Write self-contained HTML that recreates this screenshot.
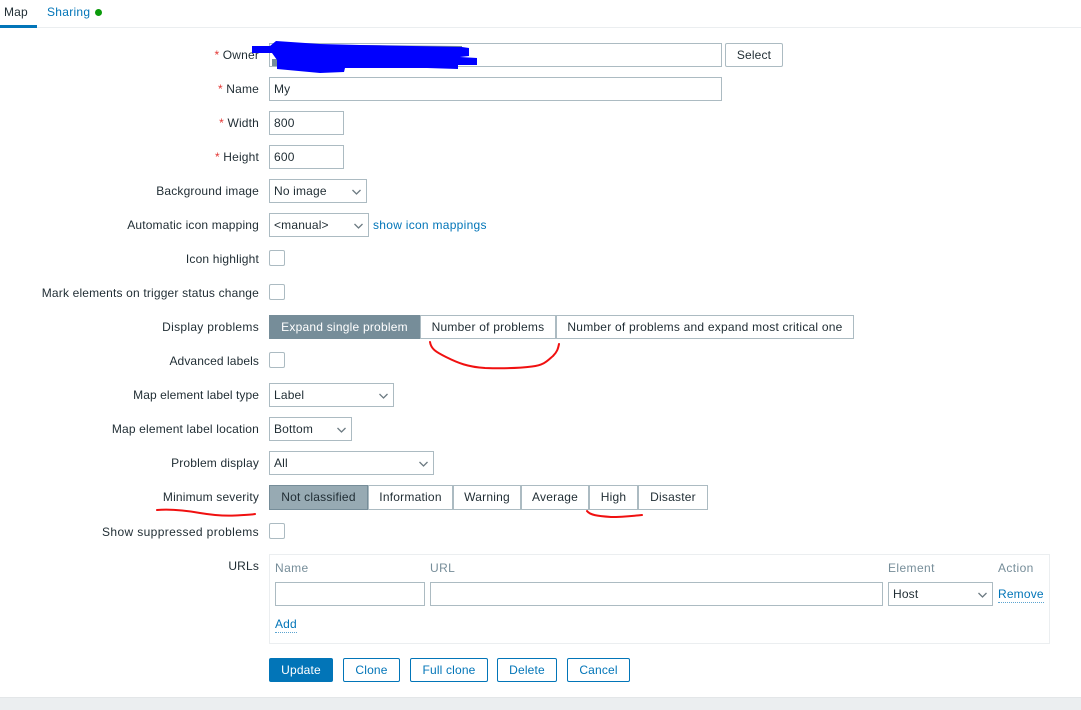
<!DOCTYPE html>
<html><head><meta charset="utf-8"><style>
html,body{margin:0;padding:0;background:#fff}
body{width:1081px;height:710px;overflow:hidden;position:relative;font:12px/14px "Liberation Sans",Arial,sans-serif;color:#1f2c33;letter-spacing:.17px}
.a,.l,.i,.s,.c,.b,.t{position:absolute;box-sizing:border-box}
.l{right:822px;text-align:right;white-space:nowrap;height:14px}
.l i{font-style:normal;color:#e33734}
.i,.s{border:1px solid #acbbc2;height:24px;background:#fff;padding:4px 4px;white-space:nowrap}
.s svg{position:absolute;right:5px;top:9px}
.c{width:16px;height:16px;border:1px solid #acbbc2;border-radius:2px;background:#fff}
.b{height:24px;border:1px solid #0275b8;border-radius:2px;color:#0275b8;text-align:center;padding-top:4px;top:658px;background:#fff}
.t{height:24px;border:1px solid #acbbc2;margin-left:-1px;text-align:center;padding-top:4px;background:#fff;white-space:nowrap;letter-spacing:.22px}
.h{position:absolute;color:#768d99;top:561px;white-space:nowrap;letter-spacing:.4px}
.k{position:absolute;color:#0275b8;white-space:nowrap;letter-spacing:.28px}
.d{border-bottom:1px dotted #5ba4d0;padding-bottom:1px;letter-spacing:.17px}
</style></head><body>
<div class="a" style="left:0;top:27px;width:1081px;height:1px;background:#ebeef0"></div>
<div class="a" style="left:0;top:25px;width:37px;height:3px;background:#0275b8"></div>
<div class="a" style="left:4px;top:5px">Map</div>
<div class="k" style="left:47px;top:5px">Sharing</div>
<div class="a" style="left:95px;top:9px;width:7px;height:7px;border-radius:50%;background:#0a9a0a"></div>

<div class="l" style="top:48px"><i>*</i> Owner</div>
<div class="i" style="left:269px;top:43px;width:453px"></div>
<div class="b" style="left:725px;top:43px;width:58px;border-color:#acbbc2;color:#1f2c33">Select</div>
<div class="l" style="top:82px"><i>*</i> Name</div>
<div class="i" style="left:269px;top:77px;width:453px">My</div>
<div class="l" style="top:116px"><i>*</i> Width</div>
<div class="i" style="left:269px;top:111px;width:75px">800</div>
<div class="l" style="top:150px"><i>*</i> Height</div>
<div class="i" style="left:269px;top:145px;width:75px">600</div>
<div class="l" style="top:184px">Background image</div>
<div class="s" style="left:269px;top:179px;width:98px">No image<svg width="9" height="6" viewBox="0 0 9 6"><path d="M.5 1L4.500 5L8.500 1" fill="none" stroke="#6c7a82" stroke-width="1.300"/></svg></div>
<div class="l" style="top:218px">Automatic icon mapping</div>
<div class="s" style="left:269px;top:213px;width:100px">&lt;manual&gt;<svg width="9" height="6" viewBox="0 0 9 6"><path d="M.5 1L4.500 5L8.500 1" fill="none" stroke="#6c7a82" stroke-width="1.300"/></svg></div>
<div class="k" style="left:373px;top:218px">show icon mappings</div>
<div class="l" style="top:252px">Icon highlight</div>
<div class="c" style="left:269px;top:250px"></div>
<div class="l" style="top:286px">Mark elements on trigger status change</div>
<div class="c" style="left:269px;top:284px"></div>
<div class="l" style="top:320px;letter-spacing:.3px">Display problems</div>
<div class="t" style="left:270px;top:315px;width:151px;background:#768d99;border-color:#768d99;color:#fff">Expand single problem</div>
<div class="t" style="left:421px;top:315px;width:136px">Number of problems</div>
<div class="t" style="left:557px;top:315px;width:298px">Number of problems and expand most critical one</div>
<div class="l" style="top:354px;letter-spacing:.1px">Advanced labels</div>
<div class="c" style="left:269px;top:352px"></div>
<div class="l" style="top:388px;letter-spacing:.08px">Map element label type</div>
<div class="s" style="left:269px;top:383px;width:125px">Label<svg width="9" height="6" viewBox="0 0 9 6"><path d="M.5 1L4.500 5L8.500 1" fill="none" stroke="#6c7a82" stroke-width="1.300"/></svg></div>
<div class="l" style="top:422px">Map element label location</div>
<div class="s" style="left:269px;top:417px;width:83px">Bottom<svg width="9" height="6" viewBox="0 0 9 6"><path d="M.5 1L4.500 5L8.500 1" fill="none" stroke="#6c7a82" stroke-width="1.300"/></svg></div>
<div class="l" style="top:456px">Problem display</div>
<div class="s" style="left:269px;top:451px;width:165px">All<svg width="9" height="6" viewBox="0 0 9 6"><path d="M.5 1L4.500 5L8.500 1" fill="none" stroke="#6c7a82" stroke-width="1.300"/></svg></div>
<div class="l" style="top:490px">Minimum severity</div>
<div class="t" style="left:270px;top:485px;height:25px;width:99px;background:#97aab3;border-color:#768d99">Not classified</div>
<div class="t" style="left:369px;top:485px;height:25px;width:85px">Information</div>
<div class="t" style="left:454px;top:485px;height:25px;width:68px">Warning</div>
<div class="t" style="left:522px;top:485px;height:25px;width:68px">Average</div>
<div class="t" style="left:590px;top:485px;height:25px;width:49px">High</div>
<div class="t" style="left:639px;top:485px;height:25px;width:70px">Disaster</div>
<div class="l" style="top:525px;letter-spacing:.37px">Show suppressed problems</div>
<div class="c" style="left:269px;top:523px"></div>
<div class="l" style="top:559px">URLs</div>

<div class="a" style="left:269px;top:554px;width:781px;height:90px;border:1px solid #ebeef0"></div>
<div class="h" style="left:275px">Name</div>
<div class="h" style="left:430px">URL</div>
<div class="h" style="left:888px">Element</div>
<div class="h" style="left:998px">Action</div>
<div class="i" style="left:275px;top:582px;width:150px"></div>
<div class="i" style="left:430px;top:582px;width:453px"></div>
<div class="s" style="left:888px;top:582px;width:105px">Host<svg width="9" height="6" viewBox="0 0 9 6"><path d="M.5 1L4.500 5L8.500 1" fill="none" stroke="#6c7a82" stroke-width="1.300"/></svg></div>
<div class="k d" style="left:998px;top:587px">Remove</div>
<div class="k d" style="left:275px;top:617px">Add</div>

<div class="b" style="left:269px;width:64px;background:#0275b8;color:#fff">Update</div>
<div class="b" style="left:343px;width:57px">Clone</div>
<div class="b" style="left:410px;width:78px">Full clone</div>
<div class="b" style="left:497px;width:60px">Delete</div>
<div class="b" style="left:567px;width:63px">Cancel</div>

<div class="a" style="left:0;top:697px;width:1081px;height:13px;background:#ebeef0;border-top:1px solid #e3e6e8"></div>

<svg class="a" style="left:0;top:0" width="1081" height="710" viewBox="0 0 1081 710">
<path d="M360 45L462 46V50H360Z" fill="#768d99"/>
<path d="M272 59h8v7h-8z" fill="#768d99"/>
<path d="M252 46L270 46L276 41L320 44L360 45L462 47L469 48L469 56L460 57L477 58L477 65L458 65L458 69L427 68L345 68L344 72L320 73L277 69L277 60L272 53L252 53Z" fill="#0000fe"/>
<g fill="none" stroke="#f01010" stroke-width="2" stroke-linecap="round" stroke-linejoin="round">
<path d="M430 342C431 349 436 352 446 357C458 363 468 367 485 368C500 368.500 520 368 532 366.500C545 365 548 360 553 356C557 352 558 349 559 344"/>
<path d="M587 511C590 515 597 516 611 517C622 517 632 516 642 515"/>
<path d="M157 510C170 509 183 510 200 513C212 515 225 516 235 515.500C243 515 250 515 255 514"/>
</g>
</svg>
</body></html>
